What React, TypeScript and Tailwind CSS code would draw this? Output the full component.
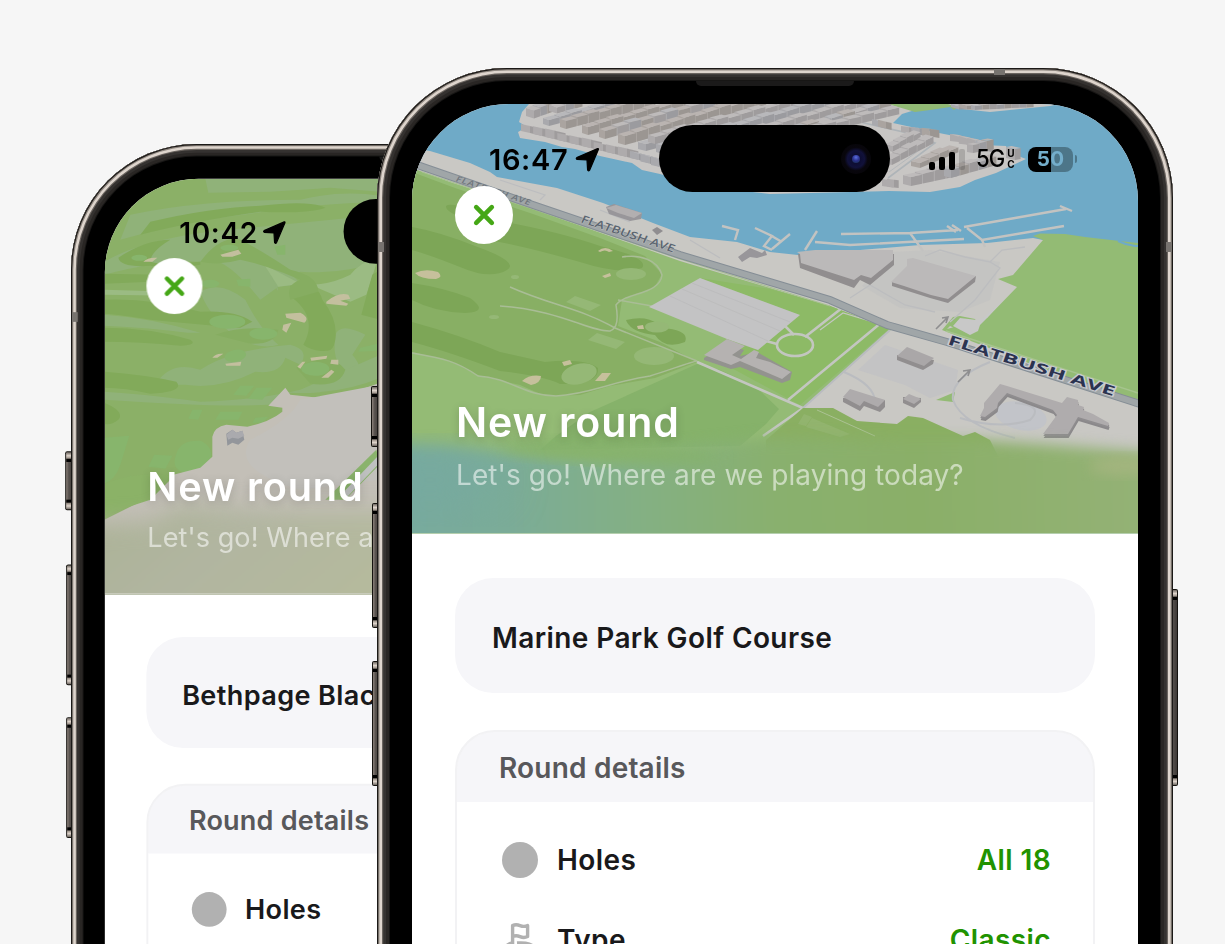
import type { ReactNode } from "react";

const FONT = "font-[Inter,'Liberation_Sans',sans-serif]";

/* ---------- map helpers ---------- */

type BlockProps = { x: number; y: number; ux: number; uy: number; vx: number; vy: number; h: number; tint?: number };

const TINTS = [
  ["#bebbbb", "#aeabac", "#9f9c9d"],
  ["#bab4b1", "#aaa4a0", "#9b9692"],
  ["#b8b8bb", "#a9a9ad", "#9b9b9f"],
];

function Block({ x, y, ux, uy, vx, vy, h, tint = 0 }: BlockProps) {
  const [top, front, side] = TINTS[tint];
  const p = (a: number, b: number) => `${a.toFixed(1)},${b.toFixed(1)}`;
  return (
    <g>
      <polygon fill={front} points={[p(x, y), p(x + vx, y + vy), p(x + vx, y + vy - h), p(x, y - h)].join(" ")} />
      <polygon
        fill={side}
        points={[p(x + vx, y + vy), p(x + vx + ux, y + vy + uy), p(x + vx + ux, y + vy + uy - h), p(x + vx, y + vy - h)].join(" ")}
      />
      <polygon
        fill={top}
        points={[p(x, y - h), p(x + ux, y + uy - h), p(x + vx + ux, y + vy + uy - h), p(x + vx, y + vy - h)].join(" ")}
      />
    </g>
  );
}

type RowProps = { from: [number, number]; to: [number, number]; n: number; h?: number; v?: [number, number]; tint?: number };

function BlockRow({ from, to, n, h = 6, v = [8, 2.4], tint }: RowProps) {
  const dx = (to[0] - from[0]) / n;
  const dy = (to[1] - from[1]) / n;
  const order = Array.from({ length: n }, (_, i) => (dy < 0 ? n - 1 - i : i));
  return (
    <g>
      {order.map((i) => (
        <Block
          key={i}
          x={from[0] + dx * i}
          y={from[1] + dy * i}
          ux={dx * 0.94}
          uy={dy * 0.94}
          vx={v[0]}
          vy={v[1]}
          h={h + ((i * 7) % 3) * 0.8}
          tint={tint ?? (i * 5 + n) % 3}
        />
      ))}
    </g>
  );
}

const SCHOOL =
  "M1000 384L1007 386L1062 403L1067 397L1078 400L1078 405L1084 407L1083 410L1093 414L1109 423L1108 426L1078 417L1068 434L1043 434L1057 415L1053 410L1007 393L998 403L997 408L985 417L980 416L984 408L984 403Z";

function MarineMap() {
  return (
    <svg className="absolute inset-0 h-full w-full" viewBox="412 104 726 430" preserveAspectRatio="none">
      <defs>
        <filter id="mSoft" x="-10%" y="-30%" width="120%" height="160%" colorInterpolationFilters="sRGB">
          <feGaussianBlur stdDeviation="7" />
        </filter>
        <filter id="mWide" x="-40%" y="-80%" width="180%" height="260%" colorInterpolationFilters="sRGB">
          <feGaussianBlur stdDeviation="24" />
        </filter>
        <linearGradient id="mFoot" x1="380" x2="1170" y1="500" y2="480" gradientUnits="userSpaceOnUse">
          <stop offset="0" stopColor="#77aa9f" />
          <stop offset="0.16" stopColor="#7bac98" />
          <stop offset="0.34" stopColor="#84b082" />
          <stop offset="0.5" stopColor="#89b06e" />
          <stop offset="0.68" stopColor="#8aaf68" />
          <stop offset="1" stopColor="#95b277" />
        </linearGradient>
      </defs>
      <rect x="412" y="104" width="726" height="430" fill="#6faac7" />

      {/* far shore */}
      <path fill="#c8c6c4" d="M529 104L522 112L519 122L527 127L518 132L520 138L545 142L562 147L575 149L600 156L632 163L642 170L660 174L700 186L770 194L889 191L930 192L960 187L975 180L996 173L1026 159L1008 152L1006 146L982 145L965 138L944 134L925 130L893 123L902 114L915 110L890 104Z" />
      <path fill="#91b974" d="M888 104L905 109L915 112L930 110L950 107L954 110L962 104Z" />
      <path fill="#c8c6c4" d="M948 104L962 109L990 112L1020 109L1050 106L1060 104Z" />
      <BlockRow from={[951, 107]} to={[966, 107]} n={2} h={3} />
      <BlockRow from={[971, 109]} to={[1030, 106]} n={8} h={4} v={[4, 1]} />

      {/* streets */}
      <g stroke="#aeb4b8" strokeWidth="1.6" fill="none">
        <path d="M888 178L935 143L912 134L860 122" />
        <path d="M889 172L932 141" strokeWidth="0.8" />
        <path d="M545 122L590 112M600 132L700 104M640 140L760 106" />
      </g>

      <BlockRow from={[526, 116]} to={[546, 109]} n={3} h={8} />
      <BlockRow from={[549, 111]} to={[575, 104]} n={3} h={6} />
      <BlockRow from={[543, 124]} to={[610, 107]} n={6} h={6} v={[6, 2]} tint={2} />
      <BlockRow from={[560, 127]} to={[650, 104]} n={8} h={8} v={[6, 2]} tint={1} />
      <BlockRow from={[582, 133]} to={[690, 104]} n={9} h={8} v={[6, 2]} tint={1} />
      <BlockRow from={[599, 137]} to={[722, 103]} n={10} h={8} v={[6, 2]} />
      <BlockRow from={[618, 143]} to={[760, 103]} n={12} h={9} v={[7, 2]} tint={1} />
      <BlockRow from={[638, 149]} to={[664, 142]} n={2} h={7} v={[8, 2]} tint={2} />
      <BlockRow from={[648, 142]} to={[796, 104]} n={12} h={7} v={[7, 2]} tint={0} />
      <BlockRow from={[656, 152]} to={[830, 104]} n={14} h={8} v={[7, 2]} tint={2} />
      <BlockRow from={[690, 152]} to={[862, 104]} n={14} h={7} v={[7, 2]} tint={0} />
      <BlockRow from={[740, 147]} to={[885, 106]} n={12} h={6} v={[7, 2]} />
      <BlockRow from={[792, 136]} to={[893, 112]} n={8} h={6} v={[7, 2]} tint={0} />
      <BlockRow from={[521, 131]} to={[630, 158]} n={9} h={7} v={[9, 2]} tint={0} />
      <BlockRow from={[630, 158]} to={[672, 172]} n={4} h={7} v={[9, 2]} tint={2} />
      <BlockRow from={[872, 125]} to={[884, 128]} n={2} h={6} v={[8, 2]} />
      <BlockRow from={[901, 132]} to={[932, 137]} n={3} h={6} v={[8, 1]} />
      <BlockRow from={[886, 150]} to={[914, 136]} n={4} h={6} v={[7, 2]} tint={0} />
      <BlockRow from={[884, 163]} to={[926, 141]} n={5} h={6} v={[8, 2]} tint={0} />
      <BlockRow from={[911, 166]} to={[950, 150]} n={4} h={5} v={[9, 2]} tint={1} />
      <BlockRow from={[950, 141]} to={[985, 152]} n={4} h={7} v={[9, 1]} tint={0} />
      <BlockRow from={[967, 152]} to={[988, 148]} n={3} h={8} v={[6, 1]} />
      <BlockRow from={[1006, 158]} to={[1012, 157]} n={1} h={11} v={[9, 2]} tint={0} />
      <BlockRow from={[882, 186]} to={[892, 187]} n={2} h={7} v={[7, 1]} tint={0} />
      <BlockRow from={[903, 184]} to={[950, 174]} n={4} h={9} v={[8, 2]} tint={0} />
      <BlockRow from={[944, 176]} to={[990, 163]} n={5} h={8} v={[7, 2]} />

      {/* near shore */}
      <path fill="#c9c8c4" d="M412 148L430 151L470 163L490 172L497 177L557 188L603 203L653 223L690 237L737 242L770 252L798 255L860 250L920 245L987 243L1033 238L1043 240L1060 300L1138 420L1138 470L412 470Z" />
      <g stroke="#c3c3c1" strokeWidth="2.4" fill="none">
        <path d="M722 226L738 230L735 240M755 228L772 236L764 246L772 250M772 249L790 234M770 235L782 242" />
        <path d="M805 250L817 231M815 242L850 245L964 239M841 234L910 233L923 251M910 233L958 230M947 226L956 232M952 225L961 231" />
        <path d="M964 227L1066 209M1060 206L1072 211M967 228L982 240L1064 226M982 240L985 247" />
      </g>
      <path fill="#93bb74" d="M1033 236L1040 233.5L1065 234L1085 237L1138 243L1138 405L942 330L953 317L960 316L975 319L978 325L970 335L950 326L947 329L987 318L1017 287L998 279L1013 275L1043 240Z" />
      <path fill="#c8c8c8" d="M953 326L960 318L977 320L983 318L1003 300L987 318L980 325L978 331L970 335Z" />
      <path d="M1118 241Q1128 246 1138 246" stroke="#6faac7" strokeWidth="2" fill="none" />
      <path fill="#c1c1c2" d="M862 286L892 252L930 250L1000 262L990 300L960 312L900 308Z" opacity="0.6" />
      <g stroke="#bcbdbf" strokeWidth="1.3" fill="none">
        <path d="M925 256L940 250L965 257L990 262L1002 250L1025 247M990 262L1000 268L975 300L950 322M850 298L870 285L905 305L935 312M500 180L545 195L540 200M600 210L630 222M690 240L720 258" />
      </g>

      {/* fields below the avenue */}
      <path fill="#94bb75" d="M412 168L450 182L533 209L680 261L770 288L830 306L893 330L803 408L760 470L412 470Z" />
      <path fill="#8dba66" d="M700 278L770 289L830 306L889 329L800 405L724 364L727 340L758 350L800 315Z" />
      <path fill="#88af64" d="M412 172L455 188L533 214L600 238L645 256L662 274L654 288L622 300L618 326L660 342L697 362L655 378L610 386L580 395L545 396L520 385L480 376L450 361L412 352Z" />
      <path fill="#86b26a" d="M697 364L720 370L755 386L779 409L766 424L740 446L540 450L556 436L590 412Z" />
      <g fill="#7da657">
        <path d="M412 227Q440 232 475 246Q520 262 507 270Q490 280 460 267Q430 255 412 250Z" />
        <path d="M500 221Q560 232 600 246Q650 258 642 268Q620 275 580 262Q520 245 488 240Z" />
        <path d="M412 283Q445 288 470 298Q490 312 465 313Q435 312 412 300Z" />
        <path d="M412 322Q460 335 500 352L545 362Q585 358 598 368Q600 385 560 384Q545 376 500 371Q450 352 412 342Z" />
        <path d="M626 320Q650 314 662 328Q690 330 685 342Q665 350 655 335Q630 332 626 320Z" />
        <path d="M446 206Q450 202 470 210L468 220Q445 212 446 206Z" />
      </g>
      <g fill="#95b876">
        <ellipse cx="579" cy="374" rx="18" ry="10" transform="rotate(-14 579 374)" />
        <ellipse cx="657" cy="327" rx="12" ry="5.5" />
        <ellipse cx="631" cy="274" rx="15" ry="6" />
        <ellipse cx="654" cy="356" rx="20" ry="9" />
        <path d="M597 333L625 342L616 349L588 340ZM575 296L601 305L590 311L566 302Z" />
        <ellipse cx="515" cy="277" rx="4" ry="2" />
        <ellipse cx="494" cy="317" rx="5" ry="2" />
      </g>
      <g fill="#c6c09c">
        <path d="M415 273Q425 268 438 272Q444 277 436 279Q420 279 415 273Z" />
        <path d="M598 251Q605 245 613 251L609 252Q605 249 600 252Z" />
        <path d="M602 276L610 273L611 276L605 278Z" />
        <path d="M522 381Q530 374 541 376Q541 383 531 385Z" />
        <path d="M562 362L570 360L572 364L564 366Z" />
        <path d="M595 381L602 373L611 373L605 381Z" />
        <path d="M637 326L643 325L644 329L638 329Z" />
      </g>
      <g stroke="#a9bd96" fill="none" strokeWidth="1.5">
        <path d="M412 353C440 358 455 360 478 376C510 378 525 396 556 396C590 394 610 382 650 376C670 370 690 362 697 361" />
        <path d="M510 287C550 305 580 308 615 328L697 361M500 306C560 310 590 332 610 331Q620 328 616 305C625 292 660 295 662 275C658 260 640 254 622 257M618 300L652 306" />
      </g>
      <path d="M422 172L533 209L680 259L830 306" stroke="#a8c192" strokeWidth="1.2" fill="none" />
      <g stroke="#c3c6c0" fill="none" strokeWidth="2.6">
        <path d="M697 362L803 408L763 436M785 326L794 335M766 341L777 344M805 337L842 308M788 400L882 322" />
        <ellipse cx="795" cy="345" rx="18" ry="11" />
        <path d="M820 330L843 313L890 327" strokeWidth="1.2" />
      </g>
      <path fill="#c3c3c4" d="M700 278L800 315L758 350L727 339L649 307Z" />
      <g stroke="#b9b9ba" strokeWidth="0.7">
        <path d="M692 283L790 322M682 289L780 331M670 296L768 341" />
      </g>
      <path fill="#93938f" d="M704 358L727 344L744 350L740 356L757 352L792 372L790 380L782 383L740 367L731 369L704 360Z" />
      <path fill="#b5b2b1" d="M704 355L727 339L745 346L732 355L741 359L754 350L759 352L756 358L770 362L791 372L782 379L740 361L731 365Z" />

      {/* school grounds */}
      <path fill="#c9c8c4" d="M893 328L947 344L1138 404L1138 480L1010 470L993 440L973 430L963 435L923 417L908 415L897 423L857 420L833 407L803 408Z" />
      <path fill="#c0c1c4" d="M858 370L885 345L958 370L955 390L930 398L905 385Z" opacity="0.7" />
      <path fill="#93bb74" d="M936 400L955 392L953 402Z" />
      <ellipse cx="1021" cy="416" rx="26" ry="14" fill="#c2c4c9" transform="rotate(12 1021 416)" />
      <g stroke="#babcc0" fill="none" strokeWidth="2">
        <path d="M990 362Q950 378 953 400Q962 425 1015 438M960 418Q1000 430 1030 420Q1045 405 1015 403M844 372Q875 385 875 402M803 408L890 330" />
      </g>
      <g fill="#918e8f">
        <path d="M798 254L894 254L894 265L870 285L860 280L854 288L800 268Z" />
        <path d="M892 282L976 276L975 282L948 303L930 298L892 286Z" />
        <path d="M897 355L934 360L933 364L923 370L897 360Z" />
        <path d="M843 398L885 400L885 407L880 412L864 406L860 411L843 402Z" />
        <path d="M903 397L921 398L921 402L914 408L903 403Z" />
      </g>
      <path fill="#bbb9b9" d="M797 252L815 250L893 250L893 260L871 278L861 275L854 280L801 263L800 254Z" />
      <path fill="#bbb9b9" d="M907 259L913 258L976 276L948 299L931 295L904 286L891 282L907 266Z" />
      <path fill="#aaa7a8" d="M907 347L934 358L924 366L897 356Z" />
      <path fill="#aeabac" d="M850 389L885 400L878 407L864 401L860 406L843 397Z" />
      <path fill="#aeabac" d="M909 394L921 399L914 404L903 399Z" />
      <path d={SCHOOL} fill="#8b898b" transform="translate(.6 4)" />
      <path d={SCHOOL} fill="#8f8d8f" transform="translate(.3 2)" />
      <path d={SCHOOL} fill="#afacad" />

      {/* avenue */}
      <path d="M412 163L423 167L533 205L680 255L770 282L830 300L887 325L947 342L1140 404" stroke="#858e96" strokeWidth="8" fill="none" />
      <path d="M412 163L423 167L533 205L680 255L770 282L830 300L887 325L947 342L1140 404" stroke="#a0a6a8" strokeWidth="6" fill="none" />
      <path d="M946 331L1138 393" stroke="#a6c48e" strokeWidth="1.6" />
      <g stroke="#8e8e8f" strokeWidth="1.6" fill="none">
        <path d="M936 329L947 318M942 318L948 317L946 323M958 382L969 371M963 371L970 370L968 376" />
      </g>
      <path d="M609 214L606 207L614 204L642 213L641 219L630 221Z" fill="#98969a" />
      <path d="M606 208L616 205L642 213L634 218L618 213Z" fill="#b2afb0" />
      <path d="M652 230L657 227L663 231L657 235Z" fill="#8f8d90" />
      <path d="M738 257L750 248L762 253L765 250L767 255L757 258L750 257L742 262Z" fill="#98969a" />

      <g fontFamily="Open Sans, sans-serif" fontWeight="700">
        <text transform="matrix(.95 .31 -.42 .72 455 181)" fontSize="10" textLength="78" fill="#6f757b" fontWeight="600">
          FLATBUSH AVE
        </text>
        <text transform="matrix(.95 .31 -.36 .75 580 222)" fontSize="13" textLength="98" lengthAdjust="spacingAndGlyphs" fill="#5b6570" fontWeight="600" stroke="#c8c8c6" strokeWidth="0.8" paintOrder="stroke">
          FLATBUSH AVE
        </text>
        <text transform="matrix(.955 .3 -.3 .86 947 344)" fontSize="15" textLength="174" lengthAdjust="spacingAndGlyphs" fill="#2b3350" stroke="#c9cbd0" strokeWidth="2.2" paintOrder="stroke">
          FLATBUSH AVE
        </text>
      </g>

      {/* frosted footer */}
      <path fill="#8aaf62" d="M766 440L803 408L833 408L857 421L897 424L908 416L923 418L963 436L975 432L990 440L1000 460L766 470Z" />
      <path fill="#98b876" d="M798 424L804 414L812 417L806 426ZM812 418L850 434L840 437L806 427Z" opacity="0.6" />
      <path d="M817 410L875 436" stroke="#abc293" strokeWidth="1" />
      <path fill="url(#mFoot)" filter="url(#mSoft)" d="M360 444L440 446L500 452L600 458L700 446L770 438L900 440L980 440L1040 444L1190 455L1190 580L360 580Z" />
      <ellipse cx="610" cy="452" rx="110" ry="10" fill="#86b26c" filter="url(#mSoft)" transform="rotate(3 610 452)" />
      <ellipse cx="430" cy="480" rx="70" ry="18" fill="#76a9a1" filter="url(#mWide)" />
      <ellipse cx="1125" cy="466" rx="36" ry="9" fill="#a4b57f" filter="url(#mSoft)" />
      <rect x="412" y="533" width="726" height="1" fill="#b5cfae" />
    </svg>
  );
}

function BethpageMap() {
  return (
    <svg className="absolute inset-0 h-full w-full" viewBox="104.5 179 701.7 415.6" preserveAspectRatio="none">
      <defs>
        <filter id="bSoft" x="-10%" y="-30%" width="120%" height="160%" colorInterpolationFilters="sRGB">
          <feGaussianBlur stdDeviation="11" />
        </filter>
        <linearGradient id="bFoot" x1="0" x2="0.5" y1="0" y2="0.1">
          <stop offset="0" stopColor="#aab294" />
          <stop offset="0.5" stopColor="#b1b5a0" />
          <stop offset="1" stopColor="#b5ba9d" />
        </linearGradient>
      </defs>
      <rect x="104" y="179" width="703" height="416" fill="#8bb067" />
      <g fill="#90b279">
        <path d="M205 179L380 179L380 192L330 188L270 192L208 193ZM130 215Q200 200 300 200Q340 190 380 196L380 202Q300 205 250 214Q180 222 120 240Z" />
        <path d="M104 262Q150 235 250 228L380 215L380 262Q340 275 300 272Q280 285 260 300Q220 250 200 262Q160 260 104 275Z" />
        <path d="M200 292Q220 280 245 300Q260 330 278 345Q262 350 240 340Q210 320 200 292Z" />
        <path d="M263 265Q300 275 298 285L277 287Q280 300 268 268Z" />
        <path d="M104 315Q150 318 200 333L187 333Q150 328 104 326ZM155 385Q170 360 200 370Q230 350 290 345Q310 350 300 365L285 358Q280 375 255 372Q220 390 185 385Z" />
        <path d="M335 335Q340 322 365 335L352 355Q365 370 355 378Q330 370 335 335Z" />
        <path d="M104 392Q150 395 200 402Q260 400 300 390L380 355L380 378Q340 395 290 393L268 405Q220 408 104 400Z" />
      </g>
      <g fill="#9bbb83">
        <path d="M104 290L175 292L175 296L104 295Z" />
        <path d="M350 275Q360 262 378 258L366 295L350 302L310 285Q330 285 350 275Z" />
        <path d="M264 265L300 284L278 287Z" />
      </g>
      <g fill="#82aa5a">
        <path d="M150 222Q210 208 260 206Q310 200 325 208Q310 214 260 212Q190 222 140 235Z" />
        <path d="M118 258Q145 240 170 240Q150 252 150 262Q160 266 200 262L200 265Q165 270 150 266Q120 268 118 258Z" />
        <path d="M290 286Q318 282 322 300Q338 320 335 340Q333 352 326 351Q312 352 303 345Q318 318 292 298Z" />
        <path d="M104 274L160 275L150 282L104 284ZM104 300Q150 298 200 312Q235 310 252 322L240 328Q200 325 150 320Q120 315 104 314Z" />
        <path d="M104 328Q150 328 190 340Q198 345 180 346Q140 342 104 342Z" />
        <path d="M104 372Q145 375 176 382Q185 392 150 394Q125 388 104 388ZM104 403Q125 412 118 420Q110 426 104 424Z" />
        <path d="M372 275L380 270L380 320L361 315Z" />
      </g>
      <g fill="#86ad61">
        <path d="M200 262Q220 235 240 240Q260 250 290 270Q318 276 318 292L290 300Q285 285 300 280Q265 265 240 260Q220 266 200 262Z" />
        <path d="M215 335Q240 325 278 330Q275 345 250 344ZM296 368Q330 350 345 370Q340 388 310 384Z" />
      </g>
      <g fill="#87b56c">
        <ellipse cx="227" cy="322" rx="18" ry="7" />
        <ellipse cx="263" cy="334" rx="14" ry="6" />
        <ellipse cx="235" cy="356" rx="11" ry="6" transform="rotate(-10 235 356)" />
        <ellipse cx="315" cy="369" rx="14" ry="7" />
        <ellipse cx="139" cy="258" rx="8" ry="3" />
        <ellipse cx="229" cy="248" rx="9" ry="3" />
        <ellipse cx="210" cy="284" rx="9" ry="4" />
        <path d="M236 280L250 279L250 287L238 286ZM360 348L377 344L377 351L358 352ZM274 247L285 245L285 255L277 255Z" />
        <path d="M176 454Q180 440 200 441Q212 446 211 458Q205 470 185 473Q170 470 176 454Z" />
        <path d="M104 438L129 436L120 465Q115 480 104 484ZM154 455L172 456L165 469L148 467ZM192 410L202 410L198 420L188 419ZM220 412L242 412L238 420L215 420ZM240 386L254 386L246 396L233 395ZM256 388L272 388L262 400L248 399ZM255 418L268 417L262 423L252 423ZM130 476L137 478L133 483L126 482Z" />
      </g>
      <g fill="#c3bf9e">
        <path d="M143 262Q148 257 157 258L152 262ZM220 255L238 250L241 254L232 257L222 257Z" />
        <path d="M212 358Q216 353 223 354L217 358ZM225 364L241 362L240 366L226 366Z" />
        <path d="M326 302Q338 292 348 295L350 299L340 301L348 304L346 306L326 304ZM285 314L300 313Q310 318 304 323L286 318ZM283 325L291 323L286 333L282 330Z" />
        <path d="M310 358L327 356L326 359L311 361ZM297 367L302 362L305 362L300 369ZM321 378L331 370L334 372L328 378ZM331 360L338 360L338 365L330 364Z" />
      </g>
      <path fill="#c3bfb7" d="M285 388L290 395L327 399L348 394L380 383L820 383L820 600L104 600L104 520L150 497L173 475L200 468L212 457L212 437Q214 427 226 425L247 427Q270 422 282 412L282 408L268 406Z" />
      <path fill="#c2c0bb" d="M300 400L380 385L380 480L300 490Q230 470 250 440Q290 420 300 400Z" />
      <path fill="#8ab36c" d="M376 450L325 500L345 500L380 464Z" />
      <path d="M382 456L342 498" stroke="#bfc1c0" strokeWidth="6" />
      <path fill="#93969b" d="M226 434L232 430L236 433L242 431L244 440L238 445L232 443L227 446Z" />
      <path fill="#aaaaae" d="M226 435L232 430L236 433L242 431L244 436L238 439L232 438L228 440Z" />
      <path fill="#8bb267" d="M104 484Q140 470 173 477L150 500L104 515Z" />
      <path fill="url(#bFoot)" filter="url(#bSoft)" d="M60 526L150 522L180 506L290 512L400 512L830 512L830 640L60 640Z" />
      <rect x="104" y="593.4" width="703" height="1.2" fill="#cdd0c2" />
    </svg>
  );
}

/* ---------- phone ---------- */

function SideButton({ className }: { className: string }) {
  return (
    <div className={`absolute rounded-[2px] bg-[#15130f] p-[1px] ${className}`}>
      <div className="flex h-full w-full flex-col justify-between overflow-hidden rounded-[1px] bg-[linear-gradient(90deg,#8b817a,#5a5450_35%,#3d3936)]">
        <div className="h-[10px] bg-[linear-gradient(180deg,#6d6660,#ddd3ca_35%,#a0968d_60%,#000_75%)]" />
        <div className="h-[10px] bg-[linear-gradient(0deg,#6d6660,#ddd3ca_35%,#a0968d_60%,#000_75%)]" />
      </div>
    </div>
  );
}

function LocationArrow() {
  return (
    <svg className="h-[25px] w-[25px]" viewBox="0 0 25 25">
      <path d="M22.6 1.6L1.8 10.6Q.6 11.6 2 12.4L12 13L12.6 23Q13.4 24.6 14.6 23.2L23.4 2.4Q23.6 1.2 22.6 1.6Z" fill="#000" stroke="#000" strokeWidth="1.2" strokeLinejoin="round" />
    </svg>
  );
}

function StatusRight() {
  return (
    <div className="flex items-center">
      <div className="flex items-end gap-[4px]">
        <div className="h-[8px] w-[6px] rounded-[2px] bg-black" />
        <div className="h-[12.5px] w-[6px] rounded-[2px] bg-black" />
        <div className="h-[17.5px] w-[6px] rounded-[2px] bg-black" />
        <div className="h-[21px] w-[6px] rounded-[2px] bg-black/15" />
      </div>
      <div className="ml-[11px] flex w-[29px] items-center">
        <span className="origin-left scale-x-[0.92] text-[24px] leading-none font-medium tracking-[-1px]">5G</span>
      </div>
      <div className="ml-[1px] flex w-[10px] flex-col items-center text-[10px] leading-[11px] font-bold">
        <span>U</span>
        <span>C</span>
      </div>
      <div className="ml-[12px] flex h-[25px] w-[45px] items-center justify-center overflow-hidden rounded-[8px] bg-[linear-gradient(90deg,#000_51%,#4d7689_51%)] text-[20.5px] leading-none font-bold tracking-[0.2px] text-[#74aecb]">
        50
      </div>
      <div className="ml-[2px] h-[8px] w-[2px] rounded-r-full bg-[#4d7689]" />
    </div>
  );
}

type PhoneProps = { time: string; course: string; map: ReactNode; className: string };

function Phone({ time, course, map, className }: PhoneProps) {
  return (
    <div className={`absolute h-[1020px] w-[796px] origin-top-left ${className}`}>
      <SideButton className="top-[318px] left-[-6px] h-[61px] w-[9px]" />
      <SideButton className="top-[435px] left-[-5px] h-[125px] w-[9px]" />
      <SideButton className="top-[593px] left-[-5px] h-[125px] w-[9px]" />
      <SideButton className="top-[521px] right-[-5px] h-[197px] w-[9px]" />

      <div className="relative h-full w-full rounded-t-[130px] bg-black px-[35px] pt-[36px] shadow-[inset_0_0_0_1.2px_#1b1917,inset_0_0_0_2.4px_#8d857e,inset_0_0_0_5px_#ded5cd,inset_0_0_0_6.2px_#6a645f,inset_0_0_0_9px_#353230,inset_0_0_0_12px_#292624,inset_0_0_0_13px_#171615]">
        <div className="absolute top-[13px] left-[319px] h-[5px] w-[158px] rounded-b-[5px] bg-[#1b1a1a]" />
        <div className="absolute top-[1px] left-[617px] h-[6px] w-[11px] bg-[#77736f]" />
        <div className="absolute top-[174px] left-[1px] h-[10px] w-[6px] bg-[#77736f]" />
        <div className="absolute top-[174px] right-[1px] h-[10px] w-[6px] bg-[#77736f]" />

        <div className="relative flex h-full flex-col overflow-hidden rounded-t-[97px] bg-white">
          <header className="relative flex h-[430px] shrink-0 flex-col">
            {map}
            <div className="relative flex h-[81px] items-center pt-[29px] pl-[77px]">
              <span className="w-[86px] text-[29px] leading-none font-semibold tracking-[0.65px] text-black">{time}</span>
              <LocationArrow />
              <div className="ml-auto pr-[61px]">
                <StatusRight />
              </div>
            </div>
            <div className="absolute top-[21px] left-[247px] flex h-[67px] w-[231px] items-center justify-end rounded-full bg-black pr-[19px]">
              <div className="flex size-[30px] items-center justify-center rounded-full bg-[radial-gradient(circle,#0a0a2c_0,#11113a_40%,#08060c_55%,#050407_100%)]">
                <div className="size-[8px] rounded-full bg-[radial-gradient(circle_at_50%_30%,#5a6ee0,#2a2f8a_50%,#17324a)]" />
              </div>
            </div>
            <button className="relative mt-[0.5px] ml-[43px] flex size-[58px] items-center justify-center rounded-full bg-white">
              <svg viewBox="0 0 24 24" className="size-[24px]" fill="none" stroke="#45a716" strokeWidth="4.6" strokeLinecap="round">
                <path d="M4.2 4.2L19.8 19.8M19.8 4.2L4.2 19.8" />
              </svg>
            </button>
            <h1 className="relative mt-auto ml-[44px] text-[41px] leading-[50px] font-semibold tracking-[0.9px] whitespace-nowrap text-white [text-shadow:0_2px_10px_rgba(0,0,0,0.16)]">
              New round
            </h1>
            <p className="relative mt-[10px] mb-[41px] ml-[44px] text-[28px] leading-[36px] tracking-[0.07px] whitespace-nowrap text-white/55">
              Let's go! Where are we playing today?
            </p>
          </header>

          <main className="flex flex-col gap-[37px] px-[43px] pt-[44px] text-[28px] font-[560] tracking-[0.4px] text-[#19191b]">
            <div className="flex h-[115px] items-center rounded-[38px] bg-[#f6f6f9] px-[37px] pt-[4px] whitespace-nowrap">
              {course}
            </div>
            <section className="h-[400px] overflow-hidden rounded-t-[40px] border-2 border-[#f2f2f4]">
              <div className="-m-[2px] flex h-[72px] items-center rounded-t-[40px] border-x-2 border-t-2 border-[#ebebed] bg-[#f6f6f9] pt-[2px] pl-[42px] tracking-[0.2px] text-[#58585b]">
                Round details
              </div>
              <div className="flex flex-col pt-[20px] pr-[42px] pl-[45px]">
                <div className="flex h-[80px] items-center">
                  <div className="size-[36px] rounded-full bg-[#b1b1b1]" />
                  <span className="ml-[19px]">Holes</span>
                  <span className="ml-auto text-[#219300]">All 18</span>
                </div>
                <div className="flex h-[80px] items-center">
                  <svg viewBox="0 0 36 36" className="size-[36px]" fill="none" stroke="#b1b1b1" strokeWidth="3.4" strokeLinejoin="round">
                    <path d="M10.6 34V3.6Q14 2 18 3.6T25.6 3.6V14.6Q22 16.4 18 14.6T10.6 14.6" />
                    <path d="M4 24Q8 21 11 21M15 21Q28 20 32 25" />
                  </svg>
                  <span className="ml-[19px]">Type</span>
                  <span className="ml-auto text-[#219300]">Classic</span>
                </div>
              </div>
            </section>
          </main>
        </div>
      </div>
    </div>
  );
}

export default function App() {
  return (
    <div className={`relative h-[944px] w-[1225px] overflow-hidden bg-[#f6f6f6] ${FONT}`}>
      <Phone className="top-[144.4px] left-[70.6px] scale-[0.9665]" time="10:42" course="Bethpage Black Course" map={<BethpageMap />} />
      <Phone className="top-[68px] left-[377px]" time="16:47" course="Marine Park Golf Course" map={<MarineMap />} />
    </div>
  );
}
